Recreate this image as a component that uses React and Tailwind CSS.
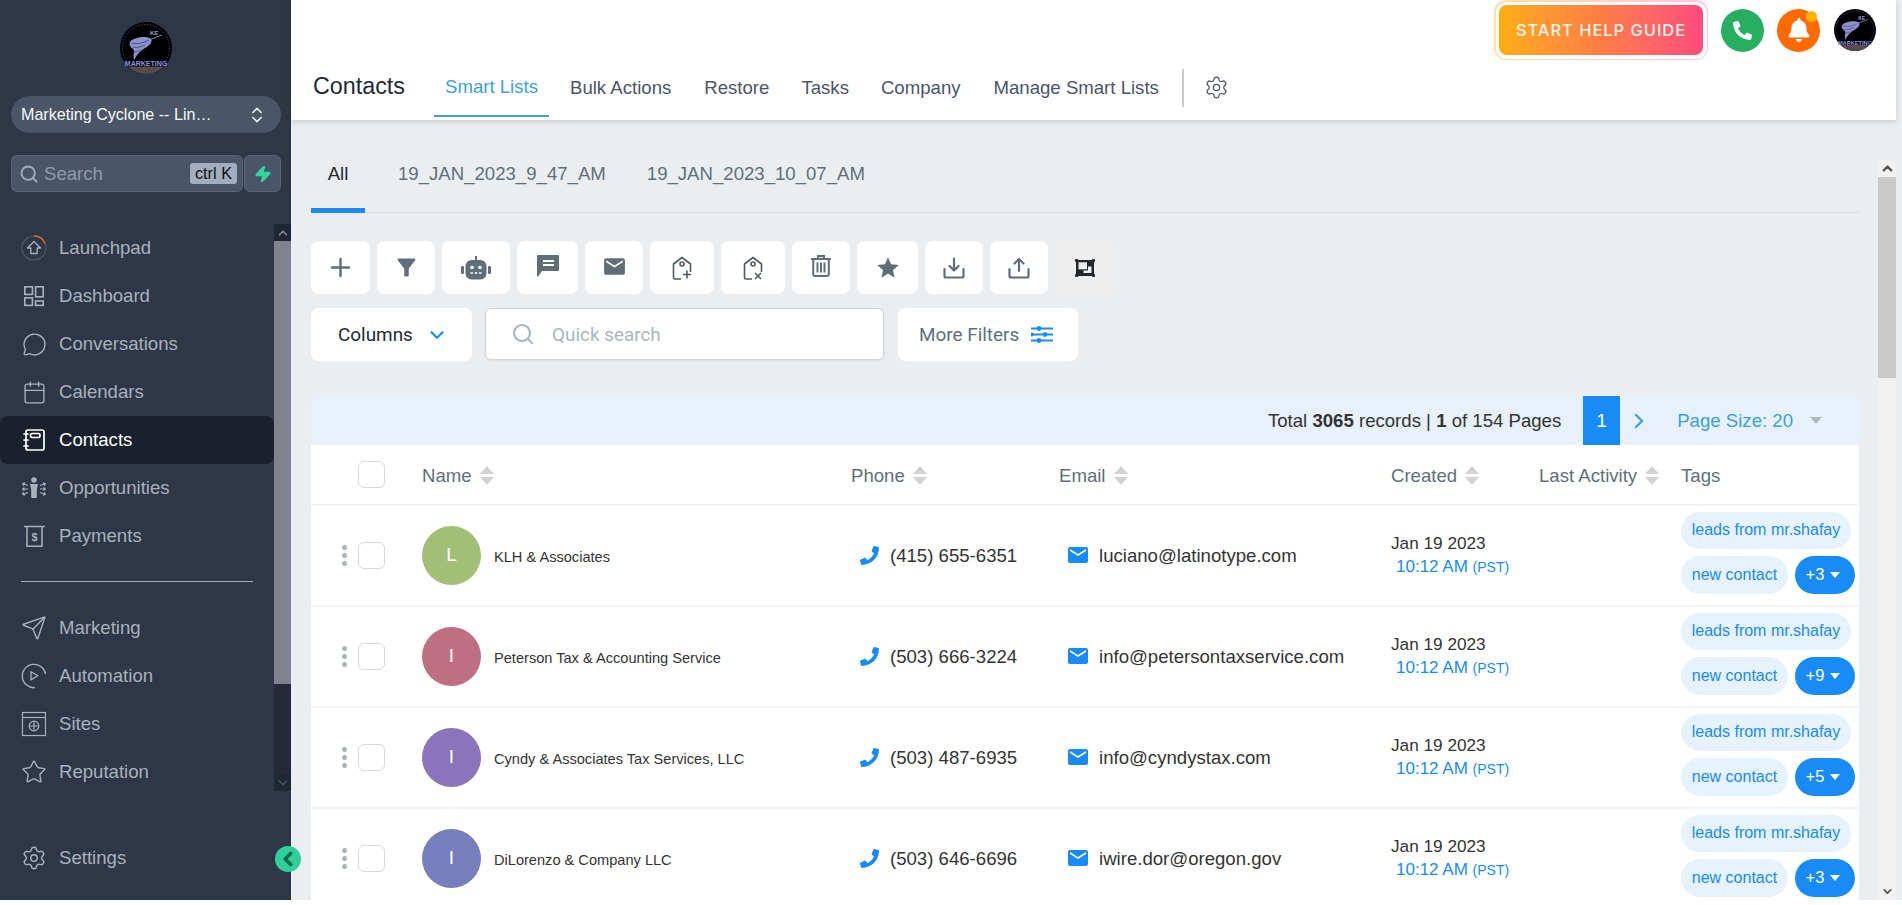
import React from "react";
import { Plus, ChevronDown, ChevronRight, ChevronsUpDown, ChevronUp, Search, MessageCircle, Calendar, Send, Star, Settings, ChevronLeft, Zap } from "lucide-react";
import { FaPhoneAlt, FaBell } from "react-icons/fa";
import { MdFilterAlt, MdEmail, MdStar } from "react-icons/md";

function Logo({ className }) {
  return (
    <svg viewBox="0 0 52 52" className={className}>
      <circle cx="26" cy="26" r="26" fill="#000" />
      <path d="M26 52a26 26 0 0 0 18-7.500H8A26 26 0 0 0 26 52z" fill="#5a4d46" />
      <path d="M10 20c2-4 16-7 21-3 2 3-2 7-6 9-4 2-8 6-11 12-1-4 0-7 0-10-2-2-6-5-4-8z" fill="#8d92cf" />
      <path d="M11 21c5 1 11 1 18-3M13 25c4 1 8 0 12-2M14 30c2 0 4-1 6-2" stroke="#3c3f77" strokeWidth="0.8" fill="none" />
      <path d="M29 18 42 13" stroke="#8d92cf" strokeWidth="1" />
      <text x="30" y="13" fontSize="6" fill="#9aa0dc" fontFamily="Liberation Sans" fontWeight="700">KE</text>
      <text x="26" y="44" textAnchor="middle" fontSize="7" fill="#8d92e0" fontFamily="Liberation Sans" fontWeight="700">MARKETING</text>
      <circle cx="26" cy="26" r="23.500" fill="none" stroke="#3a4a78" strokeWidth="1" strokeDasharray="1.500 1.500" />
    </svg>
  );
}

const I = "w-[26px] h-[26px]";
const LaunchIcon = () => (
  <svg viewBox="0 0 26 26" className={I} fill="none">
    <circle cx="13" cy="13" r="12" stroke="#4f5a6c" strokeWidth="1.2" />
    <path d="M13 1a12 12 0 0 1 11 7.500" stroke="#dd6b20" strokeWidth="1.3" />
    <path d="M13 6.500l6.500 6.500h-3.300v5.500H9.800V13H6.500z" stroke="#a9b1bd" strokeWidth="1.3" strokeLinejoin="round" />
  </svg>
);
const DashIcon = () => (
  <svg viewBox="0 0 26 26" className={I} fill="none" stroke="#a9b1bd" strokeWidth="1.6">
    <rect x="3.800" y="3.800" width="7.600" height="7.600" />
    <rect x="3.800" y="14.800" width="7.600" height="7.600" />
    <rect x="14.600" y="3.800" width="7.600" height="10" />
    <rect x="14.600" y="18" width="7.600" height="4.400" />
  </svg>
);
const ContactsIcon = () => (
  <svg viewBox="0 0 26 26" className={I} fill="none" stroke="#fff" strokeWidth="1.7" strokeLinecap="round">
    <rect x="5" y="3" width="18" height="20" rx="2" />
    <rect x="9.500" y="6.500" width="9.500" height="4" rx="1.600" />
    <path d="M3 7h4M3 13h4M3 19h4" />
  </svg>
);
const OppIcon = () => (
  <svg viewBox="0 0 26 26" className={I} fill="none" stroke="#a9b1bd" strokeWidth="1.2">
    <circle cx="13" cy="5" r="2.800" fill="#a9b1bd" stroke="none" />
    <path d="M9 9h8l-1.200 6v8h-5.600v-8z" fill="#a9b1bd" stroke="none" />
    <path d="M7 10.500 1.500 8.500M1.500 8.500l2.500-.6M1.500 8.500l1.200 2.200M7 14H1.500M1.500 14l2-1.500M1.500 14l2 1.500M7 17.500l-5.500 2M1.500 19.500l1.200-2.200M1.500 19.500l2.500.6M19 10.500l5.500-2M24.500 8.500l-2.500-.6M24.500 8.500l-1.200 2.200M19 14h5.500M24.500 14l-2-1.500M24.500 14l-2 1.500M19 17.500l5.500 2M24.500 19.500l-1.200-2.200M24.500 19.500l-2.500.6" />
  </svg>
);
const PayIcon = () => (
  <svg viewBox="0 0 26 26" className={I} fill="none" stroke="#a9b1bd" strokeWidth="1.5">
    <path d="M3 3.500h21M6 3.500v19.700h15V3.500" />
    <text x="13.500" y="17.500" textAnchor="middle" fontSize="11" fontWeight="700" fill="#a9b1bd" stroke="none" fontFamily="Liberation Sans">$</text>
  </svg>
);
const AutoIcon = () => (
  <svg viewBox="0 0 26 26" className={I} fill="none" stroke="#a9b1bd" strokeWidth="1.3">
    <path d="M24.500 11A11.700 11.700 0 1 0 14 24.700" />
    <path d="M10 8.700v8.200l6.800-4.100z" strokeLinejoin="round" />
  </svg>
);
const SitesIcon = () => (
  <svg viewBox="0 0 26 26" className={I} fill="none" stroke="#a9b1bd" strokeWidth="1.2">
    <rect x="1.500" y="1.500" width="23" height="23" />
    <path d="M1.500 6.500h23" />
    <circle cx="13" cy="15" r="4.800" />
    <path d="M8.200 15h9.600M13 10.200v9.600" />
  </svg>
);

function NavItem({ icon, label, active }) {
  return (
    <div className={`flex h-[48px] items-center rounded-[8px] pl-[21px] ${active ? "bg-[#1a202c] text-white" : "text-[#a9b1bd]"}`}>
      <span className="flex w-[26px] items-center justify-center">{icon}</span>
      <span className="ml-[12px] text-[18.6px]">{label}</span>
    </div>
  );
}

function Sidebar() {
  const lucide = { size: 26, strokeWidth: 1.3, color: "#a9b1bd" };
  return (
    <aside className="relative flex w-[291px] shrink-0 flex-col bg-[#2d3748]">
      <div className="flex justify-center pt-[22px]"><Logo className="h-[52px] w-[52px]" /></div>
      <div className="ml-[11px] mr-[10px] mt-[22px] flex h-[37px] items-center justify-between rounded-full bg-[#4a5568] pl-[10px] pr-[14px] text-[16.1px] text-[#f7fafc]">
        <span>Marketing Cyclone -- Lin…</span>
        <ChevronsUpDown size={20} strokeWidth={2} color="#e2e8f0" />
      </div>
      <div className="ml-[11px] mr-[10px] mt-[22px] flex h-[37px] gap-px">
        <div className="flex w-[232px] items-center rounded-[6px] border border-[#5a6475] bg-[#4a5568] pl-[7px] pr-[5px]">
          <Search size={20} strokeWidth={2.2} color="#a0aec0" />
          <span className="ml-[5px] flex-1 text-[18.6px] text-[#8f9bad]">Search</span>
          <span className="flex h-[21px] w-[47px] items-center justify-center rounded-[3px] bg-[#a0aec0] text-[16.3px] text-[#111]">ctrl K</span>
        </div>
        <div className="flex w-[37px] items-center justify-center rounded-[6px] border border-[#5a6475] bg-[#4a5568]">
          <Zap size={18} fill="#34d399" color="#34d399" />
        </div>
      </div>
      <div className="mt-[32px] flex h-[567px]">
        <nav className="w-[274px] overflow-hidden">
          <NavItem icon={<LaunchIcon />} label="Launchpad" />
          <NavItem icon={<DashIcon />} label="Dashboard" />
          <NavItem icon={<MessageCircle {...lucide} size={25} />} label="Conversations" />
          <NavItem icon={<Calendar {...lucide} size={25} />} label="Calendars" />
          <NavItem icon={<ContactsIcon />} label="Contacts" active />
          <NavItem icon={<OppIcon />} label="Opportunities" />
          <NavItem icon={<PayIcon />} label="Payments" />
          <div className="mx-[21px] mb-[22px] mt-[21px] h-px bg-[#a0aec0]" />
          <NavItem icon={<Send {...lucide} />} label="Marketing" />
          <NavItem icon={<AutoIcon />} label="Automation" />
          <NavItem icon={<SitesIcon />} label="Sites" />
          <NavItem icon={<Star {...lucide} />} label="Reputation" />
        </nav>
        <div className="flex w-[17px] flex-col bg-[#242b37]">
          <div className="flex h-[17px] items-center justify-center bg-[#1f2733]"><ChevronUp size={14} strokeWidth={3} color="#7e838c" /></div>
          <div className="h-[443px] bg-[#7e838c]" />
          <div className="flex-1" />
          <div className="flex h-[17px] items-center justify-center bg-[#1f2733]"><ChevronDown size={14} strokeWidth={3} color="#4a5160" /></div>
        </div>
      </div>
      <div className="mt-[43px]"><NavItem icon={<Settings {...lucide} />} label="Settings" /></div>
      <div className="absolute left-[275px] top-[846px] z-20 flex h-[26px] w-[26px] items-center justify-center rounded-full bg-[#2fd09a]">
        <ChevronLeft size={22} strokeWidth={4} color="#0d6b4f" />
      </div>
    </aside>
  );
}

function Header() {
  return (
    <header className="relative z-10 mr-[6px] h-[120px] bg-white shadow-[0_2px_6px_rgba(0,0,0,0.14)]">
      <div className="flex h-[60px] items-center justify-end pr-[20px]">
        <div className="rounded-[12px] bg-linear-to-r from-[#ffdfae] to-[#ffc6d9] p-[1.5px]">
          <div className="rounded-[11px] bg-white p-[3.5px]">
            <div className="flex h-[50px] w-[204px] items-center justify-center rounded-[8px] bg-linear-to-r from-[#ffad0d] via-[#ff7d44] to-[#ff4a7d] font-['Inter',sans-serif] text-[16.5px] font-medium tracking-[0.95px] text-[#fff3ec]">START HELP GUIDE</div>
          </div>
        </div>
        <div className="ml-[13px] flex h-[43px] w-[43px] items-center justify-center rounded-full bg-[#27ae60]"><FaPhoneAlt size={19} color="#fff" /></div>
        <div className="relative ml-[13px] flex h-[43px] w-[43px] items-center justify-center rounded-full bg-[#ff6a00]">
          <FaBell size={24} color="#fff" />
          <span className="absolute right-[3px] top-[2px] h-[11px] w-[11px] rounded-full bg-[#ffb300]" />
        </div>
        <Logo className="ml-[14px] h-[42px] w-[42px]" />
      </div>
      <div className="flex h-[60px] items-start pl-[22px] text-[18.6px] text-[#4a5568]">
        <span className="mt-[9px] w-[121px] text-[23.3px] text-[#1f2937]">Contacts</span>
        <div className="mr-[21px] flex h-[57px] w-[115px] justify-center border-b-2 border-[#3d9fdc] pt-[13px] text-[#3d9fdc]">Smart Lists</div>
        <span className="mr-[33px] mt-[14px]">Bulk Actions</span>
        <span className="mr-[32px] mt-[14px]">Restore</span>
        <span className="mr-[32px] mt-[14px]">Tasks</span>
        <span className="mr-[33px] mt-[14px]">Company</span>
        <span className="mt-[14px]">Manage Smart Lists</span>
        <span className="ml-[23px] mt-[9px] h-[38px] w-[2px] bg-[#c8ccd1]" />
        <Settings size={25} strokeWidth={1.2} color="#4a5568" className="ml-[20px] mt-[15px]" />
      </div>
    </header>
  );
}

const T = "#5f6f79";
const ToolIcons = {
  plus: <Plus size={29} strokeWidth={2} color={T} />,
  filter: <MdFilterAlt size={27} color={T} />,
  robot: (
    <svg viewBox="0 0 30 24" className="h-[24px] w-[30px]" fill={T}>
      <rect x="14" y="0" width="2" height="4" />
      <rect x="4.500" y="4" width="21" height="19.500" rx="6" />
      <rect x="0" y="10" width="3" height="8" rx="1.200" />
      <rect x="27" y="10" width="3" height="8" rx="1.200" />
      <circle cx="11" cy="11.500" r="1.800" fill="#fff" />
      <circle cx="19" cy="11.500" r="1.800" fill="#fff" />
      <path d="M9.500 17h2.500M13.800 17h2.500M18 17h2.500" stroke="#fff" strokeWidth="1.400" />
    </svg>
  ),
  chat: (
    <svg viewBox="0 0 22 22" className="mb-[3px] h-[22px] w-[22px]" fill={T}>
      <path d="M1 0h20a1 1 0 0 1 1 1v14a1 1 0 0 1-1 1H5l-4 5.500a1 1 0 0 1-1-.5V1a1 1 0 0 1 1-1z" />
      <path d="M6 6h11M6 10h11" stroke="#fff" strokeWidth="1.800" />
    </svg>
  ),
  mail: <MdEmail size={25} color={T} className="mb-[2px]" />,
  tagPlus: (
    <svg viewBox="0 0 20 24" className="h-[24px] w-[20px]" fill="none" stroke="#4e5a63" strokeWidth="1.600">
      <path d="M9 23H3a1.500 1.500 0 0 1-1.500-1.500V8L10 1.500 18.500 8v8" strokeLinejoin="round" />
      <circle cx="10" cy="8" r="2" />
      <path d="M15 14.500v8M11 18.500h8" />
    </svg>
  ),
  tagX: (
    <svg viewBox="0 0 20 24" className="h-[24px] w-[20px]" fill="none" stroke="#4e5a63" strokeWidth="1.600">
      <path d="M9 23H3a1.500 1.500 0 0 1-1.500-1.500V8L10 1.500 18.500 8v8" strokeLinejoin="round" />
      <circle cx="10" cy="8" r="2" />
      <path d="M12 17l6 6M18 17l-6 6" />
    </svg>
  ),
  trash: (
    <svg viewBox="0 0 20 22" className="mb-[4px] h-[22px] w-[20px]" fill="none" stroke={T} strokeWidth="2">
      <path d="M0 4h20M7 3V1h6v2" />
      <rect x="2.200" y="4" width="15.600" height="17" rx="2" />
      <path d="M6.500 7.500v10M10 7.500v10M13.500 7.500v10" />
    </svg>
  ),
  star: <MdStar size={26} color={T} />,
  download: (
    <svg viewBox="0 0 22 22" className="h-[22px] w-[22px]" fill="none" stroke={T} strokeWidth="2.200" strokeLinecap="round" strokeLinejoin="round">
      <path d="M1.500 12v7A1.500 1.500 0 0 0 3 20.500h16a1.500 1.500 0 0 0 1.500-1.500v-7" />
      <path d="M11 1.500v11M6.500 9l4.500 4.500L15.500 9" />
    </svg>
  ),
  upload: (
    <svg viewBox="0 0 22 22" className="h-[22px] w-[22px]" fill="none" stroke={T} strokeWidth="2.200" strokeLinecap="round" strokeLinejoin="round">
      <path d="M1.500 12v7A1.500 1.500 0 0 0 3 20.500h16a1.500 1.500 0 0 0 1.500-1.500v-7" />
      <path d="M11 14V2M6.500 6.500 11 2l4.500 4.500" />
    </svg>
  ),
  transform: (
    <svg viewBox="0 0 20 18" className="h-[18px] w-[20px]" fill="#23282d">
      <rect x="1" y="1" width="18" height="16" />
      <rect x="0" y="0" width="3" height="3" rx="1" /><rect x="17" y="0" width="3" height="3" rx="1" />
      <rect x="0" y="15" width="3" height="3" rx="1" /><rect x="17" y="15" width="3" height="3" rx="1" />
      <rect x="3.500" y="3.300" width="8.500" height="7" fill="#eeeeee" />
      <path d="M13 7.500h3.500V14H8.500v-2.500H13z" fill="#eeeeee" />
    </svg>
  ),
};

const tools = [
  ["plus", "w-[59px]"], ["filter", "w-[58px]"], ["robot", "w-[68px]"], ["chat", "w-[61px]"], ["mail", "w-[58px]"], ["tagPlus", "w-[64px]"],
  ["tagX", "w-[64px]"], ["trash", "w-[58px]"], ["star", "w-[61px]"], ["download", "w-[58px]"], ["upload", "w-[58px]"],
];

function Sort() {
  return (
    <svg viewBox="0 0 14 19" className="ml-[8px] h-[19px] w-[14px]" fill="#d2d2d2">
      <path d="M7 0l7 8H0zM0 11h14l-7 8z" />
    </svg>
  );
}

const cols = "grid grid-cols-[111px_429px_208px_332px_148px_142px_178px]";

const rows = [
  { l: "L", c: "bg-[#a1bf76]", n: "KLH & Associates", p: "(415) 655-6351", e: "luciano@latinotype.com", t: "+3" },
  { l: "I", c: "bg-[#bf6f82]", n: "Peterson Tax & Accounting Service", p: "(503) 666-3224", e: "info@petersontaxservice.com", t: "+9" },
  { l: "I", c: "bg-[#8a75bb]", n: "Cyndy & Associates Tax Services, LLC", p: "(503) 487-6935", e: "info@cyndystax.com", t: "+5" },
  { l: "I", c: "bg-[#767fbb]", n: "DiLorenzo & Company LLC", p: "(503) 646-6696", e: "iwire.dor@oregon.gov", t: "+3" },
];

function Row({ r }) {
  return (
    <div className={`${cols} h-[99px] shrink-0 items-center bg-white text-[#333]`}>
      <div className="flex items-center pl-[31px]">
        <div className="flex w-[5px] flex-col gap-[3px]">
          <span className="h-[5px] w-[5px] rounded-full bg-[#aab4bb]" />
          <span className="h-[5px] w-[5px] rounded-full bg-[#aab4bb]" />
          <span className="h-[5px] w-[5px] rounded-full bg-[#aab4bb]" />
        </div>
        <span className="ml-[11px] h-[27px] w-[27px] rounded-[6px] border border-[#d6d8de] bg-white" />
      </div>
      <div className="flex items-center">
        <div className={`flex h-[59px] w-[59px] items-center justify-center rounded-full text-[19px] text-white ${r.c}`}>{r.l}</div>
        <span className="ml-[13px] pt-[4px] text-[14.6px]">{r.n}</span>
      </div>
      <div className="flex items-center pl-[9px] text-[18.6px]">
        <FaPhoneAlt size={19} color="#188bf6" className="-scale-x-100" />
        <span className="ml-[11px]">{r.p}</span>
      </div>
      <div className="flex items-center pl-[9px] text-[18.6px]">
        <MdEmail size={24} color="#188bf6" className="-mx-[2px]" />
        <span className="ml-[11px]">{r.e}</span>
      </div>
      <div className="pb-[1px]">
        <div className="text-[17.2px] leading-[23px]">Jan 19 2023</div>
        <div className="pl-[5px] text-[17px] leading-[23px] text-[#188bf6]">10:12 AM <span className="text-[14px]">(PST)</span></div>
      </div>
      <div />
      <div className="flex flex-col gap-[7px] pb-[6px] text-[16px] text-[#188bf6]">
        <span className="flex h-[37px] w-[170px] items-center justify-center rounded-full bg-[#e6f2fd]">leads from mr.shafay</span>
        <div className="flex gap-[7px]">
          <span className="flex h-[38px] w-[107px] items-center justify-center rounded-full bg-[#e6f2fd]">new contact</span>
          <span className="flex h-[38px] w-[60px] items-center justify-center gap-[6px] rounded-full bg-[#188bf6] pr-[4px] text-[16.5px] text-white">{r.t}<span className="h-0 w-0 border-x-[5.5px] border-t-[6px] border-x-transparent border-t-white" /></span>
        </div>
      </div>
    </div>
  );
}

function Content() {
  return (
    <div className="flex min-h-0 flex-1 pt-[40px]">
      <main className="w-[1588px] shrink-0 overflow-hidden pl-[20px]">
        <div className="flex h-[53px] w-[1548px] items-start border-b-[1.5px] border-[#d9dde1] text-[18.6px] text-[#5f6f79]">
          <div className="flex h-[53px] w-[54px] shrink-0 justify-center border-b-[5px] border-[#188bf6] text-[#1f2937]">All</div>
          <span className="ml-[33px]">19_JAN_2023_9_47_AM</span>
          <span className="ml-[41px]">19_JAN_2023_10_07_AM</span>
        </div>
        <div className="mt-[28px] flex gap-[7px]">
          {tools.map(([k, w]) => (
            <div key={k} className={`flex h-[53px] items-center justify-center rounded-[8px] bg-white ${w}`}>{ToolIcons[k]}</div>
          ))}
          <div className="flex h-[53px] w-[59px] items-center justify-center rounded-[8px] bg-[#eeeeee]">{ToolIcons.transform}</div>
        </div>
        <div className="mt-[14px] flex font-['Roboto',sans-serif] text-[18.9px]">
          <div className="flex h-[53px] w-[161px] items-center rounded-[8px] bg-white pl-[27px] text-[#1f2937]">
            <span className="pt-[1px]">Columns</span><ChevronDown size={22} strokeWidth={2.4} color="#188bf6" className="ml-[13px]" />
          </div>
          <div className="ml-[13px] flex h-[52px] w-[399px] items-center rounded-[6px] border border-[#d0d4db] bg-white pl-[25px] text-[#adb5bb] shadow-[0_1px_2px_rgba(0,0,0,0.08)]">
            <Search size={24} strokeWidth={2.2} color="#adb5bb" />
            <span className="ml-[17px] pt-[2px]">Quick search</span>
          </div>
          <div className="ml-[14px] flex h-[53px] w-[180px] items-center rounded-[8px] bg-white pl-[21px] text-[#5f6f79]">
            <span className="pt-[1px]">More Filters</span>
            <svg viewBox="0 0 22 17" className="ml-[12px] h-[17px] w-[22px]" fill="#188bf6" stroke="#188bf6" strokeWidth="1.800">
              <path d="M0 2.500h22M0 8.500h22M0 14.500h22" fill="none" />
              <circle cx="8" cy="2.500" r="1.500" /><circle cx="14" cy="8.500" r="1.500" /><circle cx="8" cy="14.500" r="1.500" /><circle cx="1" cy="8.500" r="1" />
            </svg>
          </div>
        </div>
        <div className="mt-[35px] flex w-[1548px] flex-col gap-[2px] overflow-hidden rounded-t-[12px] bg-[#f1f5f9]">
          <div>
            <div className="flex h-[49px] items-center justify-end bg-[#e6f1fb] text-[18.6px] text-[#333]">
              <span>Total <b>3065</b> records | <b>1</b> of 154 Pages</span>
              <span className="ml-[22px] flex h-[49px] w-[37px] items-center justify-center bg-[#188bf6] text-white">1</span>
              <ChevronRight size={24} strokeWidth={2.4} color="#3d9fdc" className="ml-[7px]" />
              <span className="ml-[26px] text-[#3d9fdc]">Page Size: 20</span>
              <span className="ml-[17px] mr-[37px] h-0 w-0 border-x-[6px] border-t-[7px] border-x-transparent border-t-[#b3b8bd]" />
            </div>
            <div className={`${cols} h-[59px] items-center bg-white text-[18.6px] text-[#5f6f79]`}>
              <div className="pl-[47px]"><span className="block h-[27px] w-[27px] rounded-[6px] border border-[#d6d8de]" /></div>
              <div className="flex items-center pt-[3px]">Name<Sort /></div>
              <div className="flex items-center pt-[3px]">Phone<Sort /></div>
              <div className="flex items-center pt-[3px]">Email<Sort /></div>
              <div className="flex items-center pt-[3px]">Created<Sort /></div>
              <div className="flex items-center pt-[3px]">Last Activity<Sort /></div>
              <div className="pt-[3px]">Tags</div>
            </div>
          </div>
          {rows.map((r) => <Row key={r.n} r={r} />)}
        </div>
      </main>
      <div className="ml-[-1px] flex w-[18px] shrink-0 flex-col bg-[#f1f1f1]">
        <div className="flex h-[17px] items-center justify-center"><ChevronUp size={15} strokeWidth={3.5} color="#505050" /></div>
        <div className="h-[201px] bg-[#c9c9c9]" />
        <div className="flex-1" />
        <div className="flex h-[17px] items-center justify-center"><ChevronDown size={13} strokeWidth={3} color="#505050" /></div>
      </div>
    </div>
  );
}

export default function App() {
  return (
    <div className="h-[905px] w-full overflow-hidden bg-white font-['Liberation_Sans',sans-serif]">
      <div className="flex h-[900px]">
        <Sidebar />
        <div className="flex min-w-0 flex-1 flex-col bg-[#ebeef1]">
          <Header />
          <Content />
        </div>
      </div>
    </div>
  );
}
